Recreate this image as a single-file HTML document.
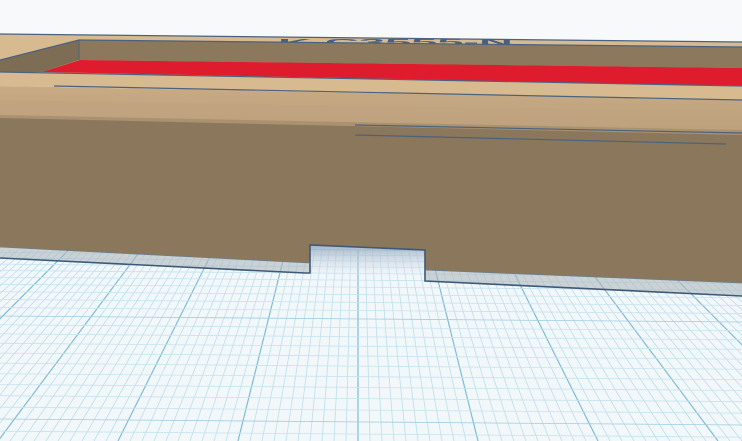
<!DOCTYPE html>
<html><head><meta charset="utf-8"><style>
html,body{margin:0;padding:0;width:742px;height:441px;overflow:hidden;background:#f8f9fa}
svg{display:block}
</style></head><body>
<svg id="s" width="742" height="441" viewBox="0 0 742 441" xmlns="http://www.w3.org/2000/svg">
<defs>
<linearGradient id="face" x1="0" y1="0" x2="0" y2="1">
<stop offset="0" stop-color="#c8ab85"/>
<stop offset="0.35" stop-color="#b59a76"/>
<stop offset="0.55" stop-color="#8c785c"/>
<stop offset="1" stop-color="#8b775b"/>
</linearGradient>
<linearGradient id="notch" x1="0" y1="0" x2="0" y2="1">
<stop offset="0" stop-color="#8fa3bb"/>
<stop offset="1" stop-color="#eef4f8" stop-opacity="0"/>
</linearGradient>
</defs>
<rect x="0" y="0" width="742" height="441" fill="#f8f9fa"/>
<rect x="0" y="230" width="742" height="211" fill="#f2f7fa"/>
<g id="grid"></g>
<polygon points="0,34 742,42 742,100 0,86" fill="#d8ba90"/>
<g transform="translate(0,45) scale(1,0.5)">
<text x="278" y="0" font-family="Liberation Sans, sans-serif" font-weight="bold" font-size="16" fill="#46607e" textLength="235" lengthAdjust="spacingAndGlyphs">K    C3555-N</text>
</g>
<polygon points="0,60 79,40 79,60 42,72 0,72" fill="#7e6d55"/>
<polygon points="79,40 742,47 742,68 79,60" fill="#8c785c"/>
<polygon points="80,60 742,68 742,86 42,72" fill="#de1c2e"/>
<polyline points="0,60 79,40 742,47" fill="none" stroke="#4a6280" stroke-width="1.2"/>
<line x1="79" y1="40" x2="79" y2="60" stroke="#4a6280" stroke-width="1"/>
<line x1="0" y1="72" x2="742" y2="86" stroke="#4a6280" stroke-width="1.2"/>
<line x1="0" y1="34" x2="742" y2="42" stroke="#4a6280" stroke-width="1.2"/>
<polygon points="0,86 742,100 742,283 425,270 425,250 310,245 310,263 0,247" fill="url(#face)"/>
<polygon points="0,115 742,130 742,283 425,270 425,250 310,245 310,263 0,247" fill="#8b775b"/>
<polygon points="0,100 742,112 742,135 0,118" fill="#bfa37e" opacity="0.6"/>
<line x1="54" y1="86" x2="742" y2="100" stroke="#4a6280" stroke-width="1.2"/>
<line x1="355" y1="125" x2="742" y2="133" stroke="#4a6280" stroke-width="1.2"/>
<line x1="355" y1="135" x2="726" y2="144" stroke="#4a6280" stroke-width="1.2"/>
<polygon points="0,247 310,263 310,273 0,258" fill="#a9b4b8" opacity="0.55"/>
<polygon points="425,270 742,283 742,296 425,281" fill="#a9b4b8" opacity="0.55"/>
<polygon points="310,245 425,250 425,281 310,273" fill="url(#notch)" opacity="0.8"/>
<polyline points="0,258 305,273 310,273 310,245 425,250 425,281 742,296" fill="none" stroke="#3e5878" stroke-width="1.6"/>
<line x1="0" y1="247" x2="310" y2="263" stroke="#6b7f8f" stroke-width="0.8"/>
<line x1="425" y1="270" x2="742" y2="283" stroke="#6b7f8f" stroke-width="0.8"/>
</svg>
<script>
var g=document.getElementById('grid'),h='';
var vx=358,vy=-40;
for(var k=-60;k<=60;k++){
 var x=358+k*12; var y0=250;
 var t=(y0-vy)/(441-vy); var xt=vx+(x-vx)*t;
 var maj=(k%10==0);
 h+='<line x1="'+x+'" y1="441" x2="'+xt+'" y2="'+y0+'" stroke="'+(maj?'#7fbcd6':'#bcdeec')+'" stroke-width="'+(maj?1.2:0.8)+'"/>';
}
for(var i=0;i<40;i++){
 var y=250+i*(5.2+i*0.17);
 if(y>441)break;
 h+='<line x1="0" y1="'+(y-3)+'" x2="742" y2="'+(y+3)+'" stroke="'+(i%10==0?'#9fcde0':'#c6e3ef')+'" stroke-width="0.8"/>';
}
g.innerHTML=h;
</script>
</body></html>
